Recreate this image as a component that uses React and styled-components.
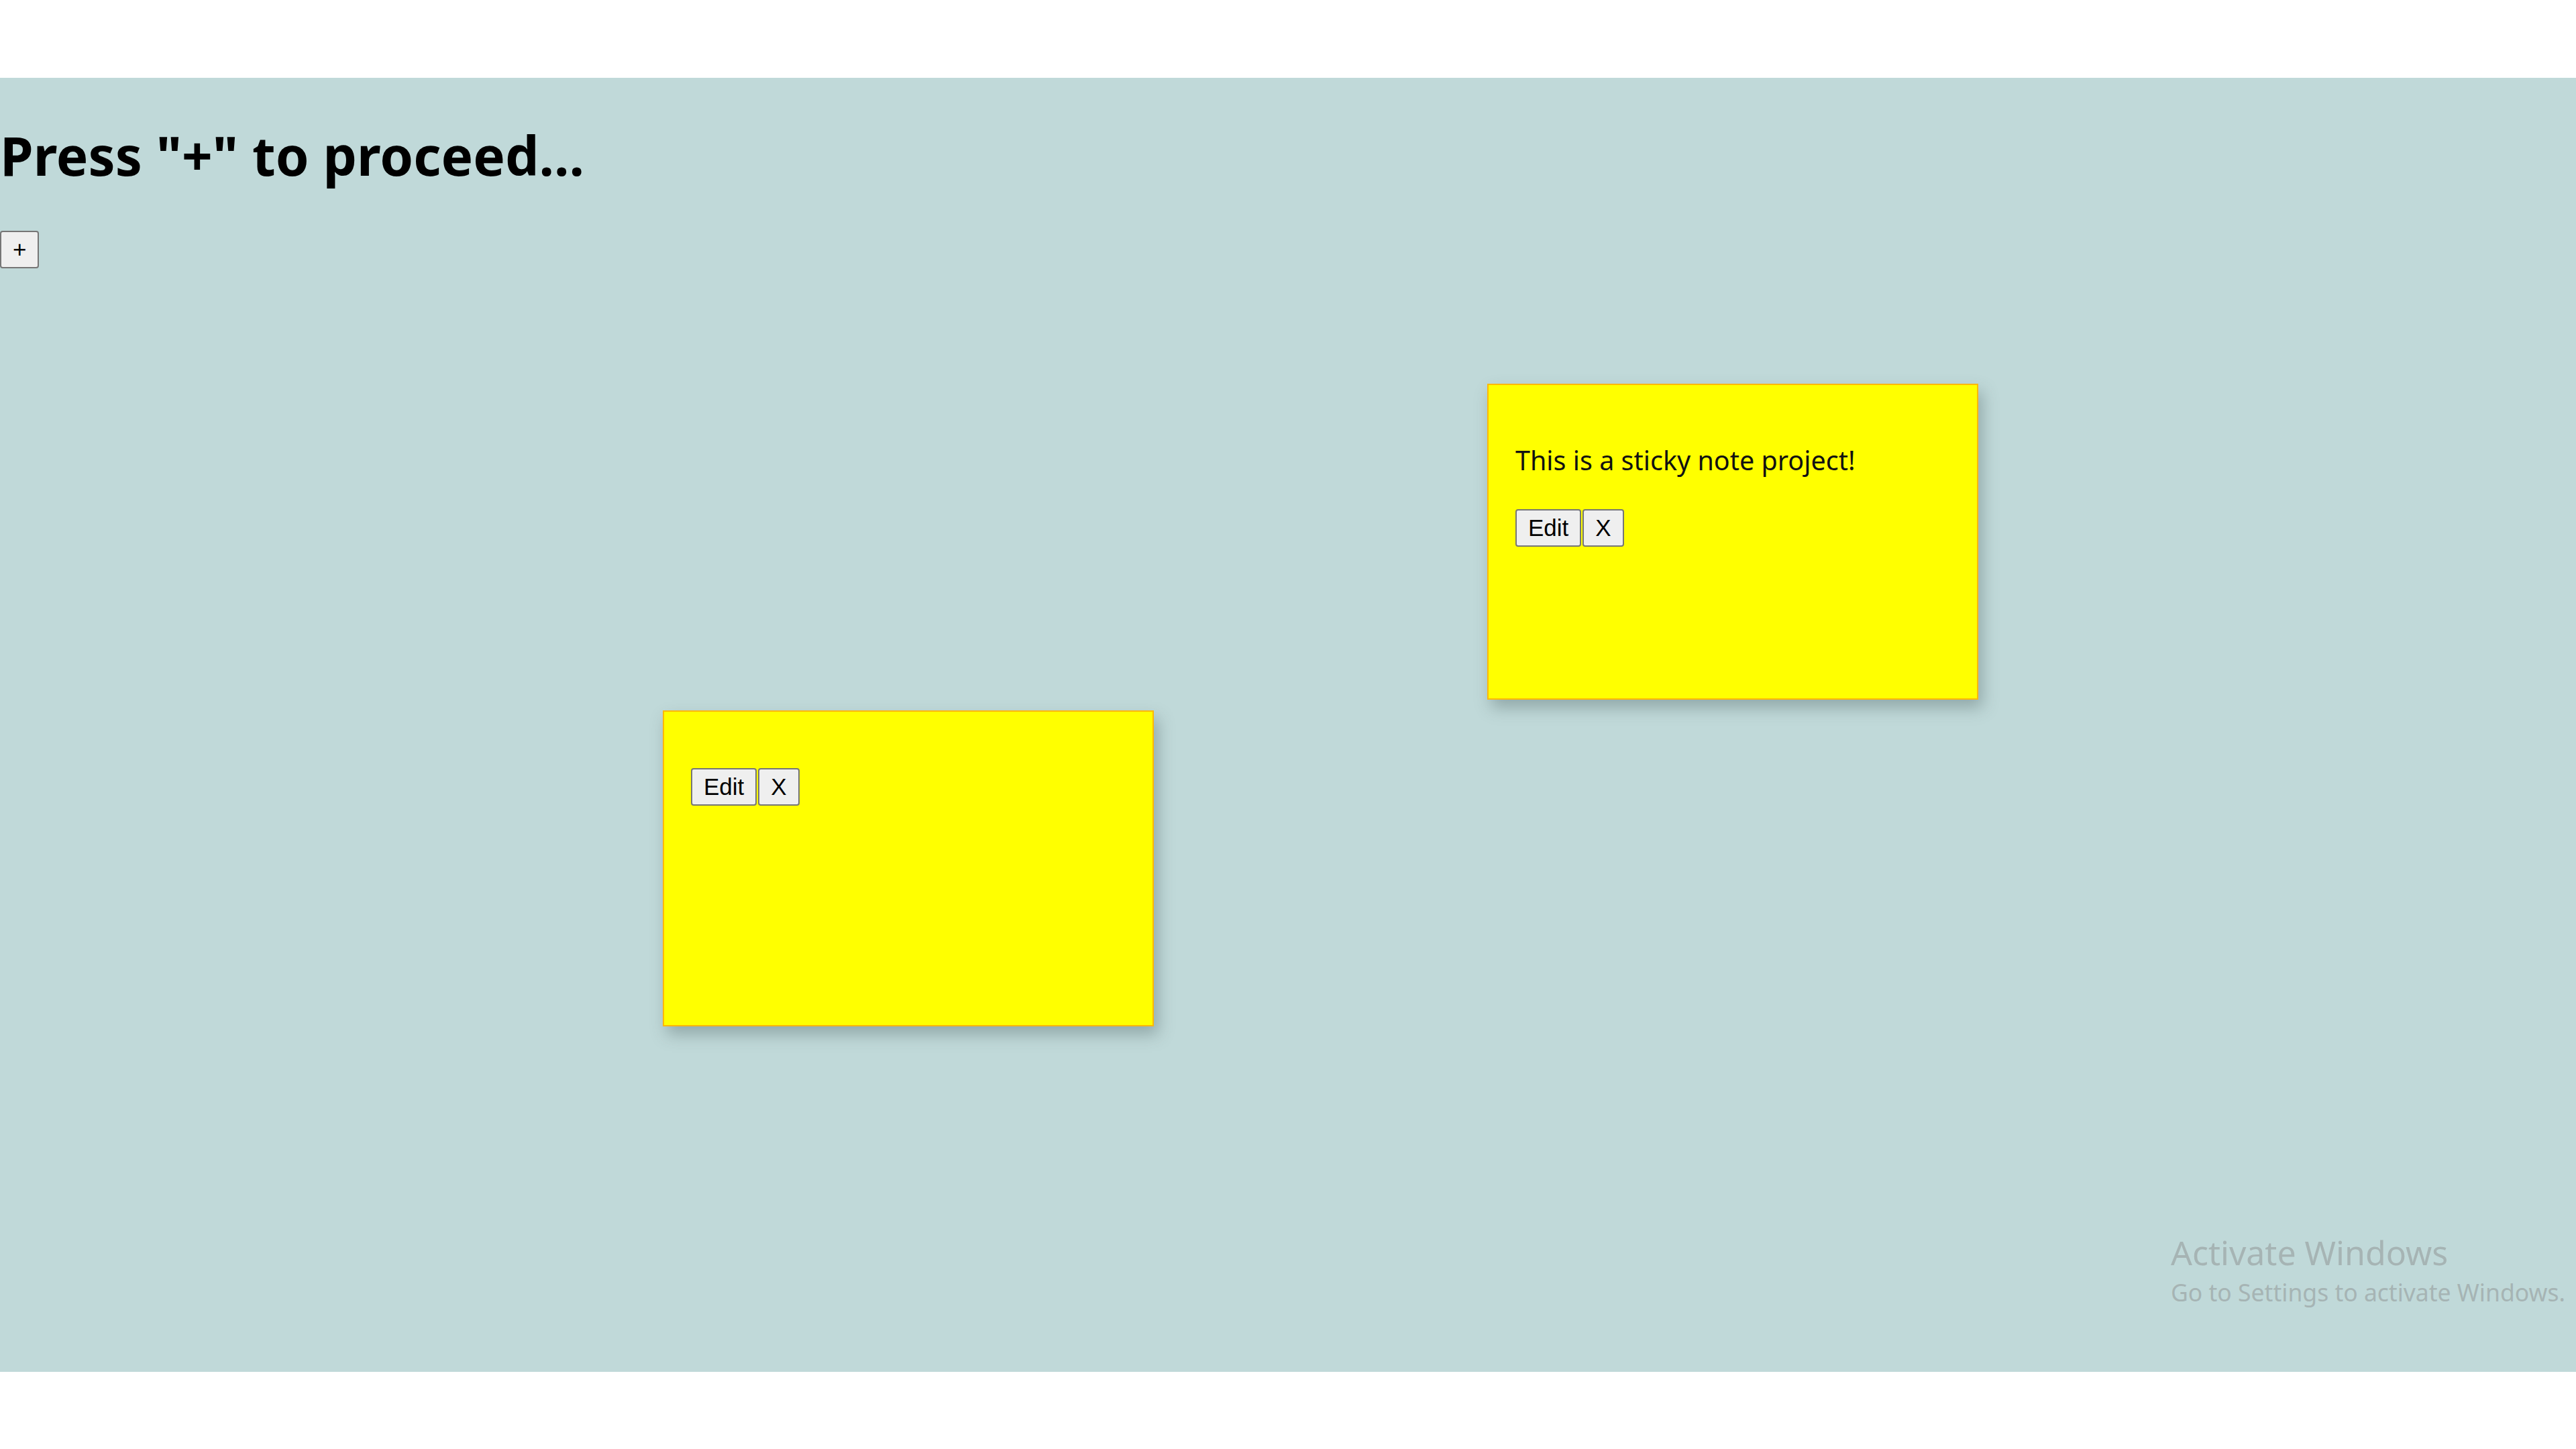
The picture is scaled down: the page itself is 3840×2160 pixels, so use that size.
import styled, { createGlobalStyle } from "styled-components";

const GlobalStyle = createGlobalStyle`
  body {
    margin: 0;
    background: #ffffff;
    font-family: "Noto Sans", "Open Sans", sans-serif;
  }
`;

const Page = styled.div`
  padding: 116px 0 115px;
`;

const Board = styled.main`
  position: relative;
  height: 1929px;
  background: #c0d9d9;
  overflow: hidden;
`;

const Header = styled.header`
  display: flex;
  flex-direction: column;
  align-items: flex-start;
`;

const Heading = styled.h1`
  margin: 64px 0 0;
  font-size: 80px;
  line-height: 102px;
  font-weight: 700;
  color: #000;
  white-space: nowrap;
`;

const ButtonRow = styled.div`
  display: flex;
  gap: 2px;
  margin-top: ${(p) => p.$top || 0}px;
`;

const Btn = styled.button`
  height: 56px;
  padding: 0 ${(p) => p.$pad || 17}px;
  font-family: "Liberation Sans", Arial, sans-serif;
  font-size: 35px;
  color: #000;
  background: #efefef;
  border: 2px solid #767676;
  border-radius: 4px;
  cursor: pointer;
`;

const Note = styled.div`
  position: absolute;
  left: ${(p) => p.$x}px;
  top: ${(p) => p.$y}px;
  width: 732px;
  height: 471px;
  box-sizing: border-box;
  padding: 84px 40px 40px;
  background: #ffff00;
  border: 2px solid #ffb800;
  box-shadow: 6px 12px 22px rgba(60, 80, 80, 0.35);
`;

const NoteText = styled.p`
  margin: 0 0 45px;
  font-size: 39.5px;
  line-height: 56px;
  color: #111;
  white-space: nowrap;
`;

const Watermark = styled.div`
  position: absolute;
  left: 3236px;
  top: 1718px;
  color: #a6b4b4;
  white-space: nowrap;
  pointer-events: none;
`;

const WatermarkTitle = styled.div`
  font-size: 50px;
  line-height: 66px;
`;

const WatermarkHint = styled.div`
  font-size: 35.5px;
  line-height: 52px;
`;

const notes = [
  { id: 1, x: 2217, y: 456, text: "This is a sticky note project!" },
  { id: 2, x: 988, y: 943, text: "" },
];

export default function App() {
  return (
    <>
      <GlobalStyle />
      <Page>
        <Board>
          <Header>
            <Heading>Press "+" to proceed...</Heading>
            <ButtonRow $top={62}>
              <Btn $pad={17}>+</Btn>
            </ButtonRow>
          </Header>

          {notes.map((note) => (
            <Note key={note.id} $x={note.x} $y={note.y}>
              {note.text && <NoteText>{note.text}</NoteText>}
              <ButtonRow>
                <Btn>Edit</Btn>
                <Btn>X</Btn>
              </ButtonRow>
            </Note>
          ))}

          <Watermark>
            <WatermarkTitle>Activate Windows</WatermarkTitle>
            <WatermarkHint>Go to Settings to activate Windows.</WatermarkHint>
          </Watermark>
        </Board>
      </Page>
    </>
  );
}
